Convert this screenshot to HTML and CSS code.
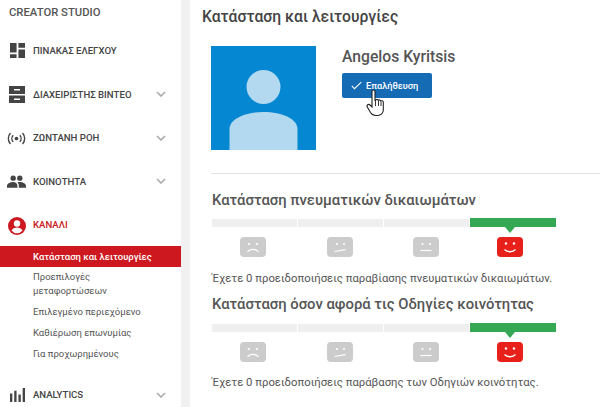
FILE: index.html
```html
<!DOCTYPE html>
<html lang="el">
<head>
<meta charset="utf-8">
<title>Κατάσταση και λειτουργίες</title>
<link rel="stylesheet" href="styles.css">
</head>
<body>
<div class="app">
  <nav class="sidebar">
    <div class="brand">CREATOR STUDIO</div>
    <div class="nav-item">
      <svg class="nav-icon" viewBox="0 0 16 16"><path d="M0 0h7v10H0zM9 0h7v5H9zM0 12h7v4H0zM9 7h7v9H9z" fill="#444"/></svg>
      <span class="nav-label">ΠΙΝΑΚΑΣ ΕΛΕΓΧΟΥ</span>
    </div>
    <div class="nav-item">
      <svg class="nav-icon archive" viewBox="0 0 16 17"><path fill-rule="evenodd" d="M0 0h16v8H0zM0 9.500h16V17H0zM5 3v1.500h6V3zM5 12.500V14h6v-1.500z" fill="#444"/></svg>
      <span class="nav-label">ΔΙΑΧΕΙΡΙΣΤΗΣ ΒΙΝΤΕΟ</span>
      <svg class="chev" viewBox="0 0 10 6"><path d="M1 1l4 4 4-4" fill="none" stroke="#aaa" stroke-width="1.600"/></svg>
    </div>
    <div class="nav-item">
      <svg class="nav-icon live" viewBox="0 0 20 14"><circle cx="10" cy="7" r="2" fill="#444"/><path d="M6.500 3.500a5 5 0 0 0 0 7M13.500 3.500a5 5 0 0 1 0 7M3.500 1a9 9 0 0 0 0 12M16.500 1a9 9 0 0 1 0 12" fill="none" stroke="#444" stroke-width="1.500"/></svg>
      <span class="nav-label">ΖΩΝΤΑΝΗ ΡΟΗ</span>
      <svg class="chev" viewBox="0 0 10 6"><path d="M1 1l4 4 4-4" fill="none" stroke="#aaa" stroke-width="1.600"/></svg>
    </div>
    <div class="nav-item">
      <svg class="nav-icon people" viewBox="0 0 20 13"><circle cx="6.500" cy="3" r="2.800" fill="#444"/><circle cx="13.500" cy="3" r="2.800" fill="#444"/><path d="M0 13v-2c0-2.500 4-4 6.500-4S11 8.500 11 11v2zM12.500 13v-2c0-1.500-.6-2.800-1.700-3.700.9-.2 1.900-.3 2.700-.3 2.500 0 6.500 1.500 6.500 4v2z" fill="#444"/></svg>
      <span class="nav-label">ΚΟΙΝΟΤΗΤΑ</span>
      <svg class="chev" viewBox="0 0 10 6"><path d="M1 1l4 4 4-4" fill="none" stroke="#aaa" stroke-width="1.600"/></svg>
    </div>
    <div class="nav-item nav-current">
      <svg class="nav-icon account" viewBox="0 0 18 18"><circle cx="9" cy="9" r="9" fill="#cc181e"/><circle cx="9" cy="6.500" r="3.200" fill="#fff"/><path d="M3.500 13.500c.8-2 3.500-3 5.500-3s4.700 1 5.500 3a7 7 0 0 1-11 0z" fill="#fff"/></svg>
      <span class="nav-label">ΚΑΝΑΛΙ</span>
    </div>
    <ul class="subnav">
      <li class="sub-active">Κατάσταση και λειτουργίες</li>
      <li>Προεπιλογές<br>μεταφορτώσεων</li>
      <li>Επιλεγμένο περιεχόμενο</li>
      <li>Καθιέρωση επωνυμίας</li>
      <li>Για προχωρημένους</li>
    </ul>
    <div class="nav-item nav-last">
      <svg class="nav-icon" viewBox="0 0 16 16"><path d="M0 7h2.500v9H0zM4.500 4h2.500v12H4.500zM9 8h2.500v8H9zM13.500 1H16v15h-2.500z" fill="#444"/></svg>
      <span class="nav-label">ANALYTICS</span>
      <svg class="chev" viewBox="0 0 10 6"><path d="M1 1l4 4 4-4" fill="none" stroke="#aaa" stroke-width="1.600"/></svg>
    </div>
  </nav>
  <main class="main">
    <h1 class="page-title">Κατάσταση και λειτουργίες</h1>
    <section class="profile">
      <svg class="avatar" viewBox="0 0 105 104"><rect width="105" height="104" fill="#0587d1"/><circle cx="52.500" cy="41" r="17" fill="#b3d9f1"/><path d="M18.500 104V83c0-10 15-17 34-17s34 7 34 17v21z" fill="#b3d9f1"/></svg>
      <div class="profile-info">
        <div class="name">Angelos Kyritsis</div>
        <div class="verify">
          <svg class="check" viewBox="0 0 12 9"><path d="M.800 5l3 3L11.200.800" fill="none" stroke="#fff" stroke-width="1.100"/></svg>
          <span>Επαλήθευση</span>
        </div>
        <svg class="cursor" viewBox="0 0 20 28"><path d="M6 2.500c0-2 3-2 3 0V12l.5-1c1-.8 2.300-.5 2.700.3 1-.7 2.300-.4 2.600.6 1-.5 2.300 0 2.500 1.200V21c0 3-2.500 5.500-5.500 5.500h-2c-2.500 0-4-1-5.300-3L1.300 18c-1-1.800 1.200-3.500 2.700-2l2 2z" fill="#fff" stroke="#222" stroke-width="1.100"/><path d="M9.500 11v6M12.500 11.500V17M15 12.500V17" stroke="#222" stroke-width=".9" fill="none"/></svg>
      </div>
    </section>
    <section class="status first">
      <h2 class="status-title">Κατάσταση πνευματικών δικαιωμάτων</h2>
      <div class="meter">
        <div class="seg"></div><div class="seg"></div><div class="seg"></div><div class="seg on"></div>
      </div>
      <div class="faces">
        <svg class="face" viewBox="0 0 26 20"><rect width="26" height="20" rx="4" fill="#ccc"/><circle cx="9" cy="7" r="1.100" fill="#fff"/><circle cx="17" cy="7" r="1.100" fill="#fff"/><path d="M7.500 15c2.500-3.500 8.500-3.500 11 0" fill="none" stroke="#fff" stroke-width="1.200"/></svg>
        <svg class="face" viewBox="0 0 26 20"><rect width="26" height="20" rx="4" fill="#ccc"/><circle cx="10" cy="7" r="1.100" fill="#fff"/><circle cx="17" cy="7" r="1.100" fill="#fff"/><path d="M7.500 14.500l11-1.800" fill="none" stroke="#fff" stroke-width="1.200"/></svg>
        <svg class="face" viewBox="0 0 26 20"><rect width="26" height="20" rx="4" fill="#ccc"/><circle cx="9.500" cy="7" r="1.100" fill="#fff"/><circle cx="17" cy="7" r="1.100" fill="#fff"/><path d="M7.500 13.500h11" fill="none" stroke="#fff" stroke-width="1.200"/></svg>
        <svg class="face" viewBox="0 0 26 20"><rect width="26" height="20" rx="4" fill="#e8201a"/><circle cx="9" cy="6.500" r="1.200" fill="#fff"/><circle cx="17" cy="6.500" r="1.200" fill="#fff"/><path d="M7.500 12.500c2.500 3 8.500 3 11 0" fill="none" stroke="#fff" stroke-width="1.300"/></svg>
      </div>
      <p class="status-text">Έχετε 0 προειδοποιήσεις παραβίασης πνευματικών δικαιωμάτων.</p>
    </section>
    <section class="status second">
      <h2 class="status-title">Κατάσταση όσον αφορά τις Οδηγίες κοινότητας</h2>
      <div class="meter">
        <div class="seg"></div><div class="seg"></div><div class="seg"></div><div class="seg on"></div>
      </div>
      <div class="faces">
        <svg class="face" viewBox="0 0 26 20"><rect width="26" height="20" rx="4" fill="#ccc"/><circle cx="9" cy="7" r="1.100" fill="#fff"/><circle cx="17" cy="7" r="1.100" fill="#fff"/><path d="M7.500 15c2.500-3.500 8.500-3.500 11 0" fill="none" stroke="#fff" stroke-width="1.200"/></svg>
        <svg class="face" viewBox="0 0 26 20"><rect width="26" height="20" rx="4" fill="#ccc"/><circle cx="10" cy="7" r="1.100" fill="#fff"/><circle cx="17" cy="7" r="1.100" fill="#fff"/><path d="M7.500 14.500l11-1.800" fill="none" stroke="#fff" stroke-width="1.200"/></svg>
        <svg class="face" viewBox="0 0 26 20"><rect width="26" height="20" rx="4" fill="#ccc"/><circle cx="9.500" cy="7" r="1.100" fill="#fff"/><circle cx="17" cy="7" r="1.100" fill="#fff"/><path d="M7.500 13.500h11" fill="none" stroke="#fff" stroke-width="1.200"/></svg>
        <svg class="face" viewBox="0 0 26 20"><rect width="26" height="20" rx="4" fill="#e8201a"/><circle cx="9" cy="6.500" r="1.200" fill="#fff"/><circle cx="17" cy="6.500" r="1.200" fill="#fff"/><path d="M7.500 12.500c2.500 3 8.500 3 11 0" fill="none" stroke="#fff" stroke-width="1.300"/></svg>
      </div>
      <p class="status-text">Έχετε 0 προειδοποιήσεις παράβασης των Οδηγιών κοινότητας.</p>
    </section>
  </main>
</div>
</body>
</html>
```
FILE: styles.css
```css
* { box-sizing: border-box; }
html, body { margin: 0; height: 100%; overflow: hidden; }
body { background: #fff; font-family: Roboto, "Noto Sans", sans-serif; color: #444; }
.app { display: flex; width: 600px; height: 407px; overflow: hidden; }
.sidebar { width: 190px; flex: none; height: 407px; background: #fff; border-right: 9px solid #f1f1f1; padding-top: 5px; }
.brand { font-size: 11.300px; font-weight: 500; color: #555; height: 16px; line-height: 16px; padding-left: 9px; margin-bottom: 8px; }
.nav-item { display: flex; align-items: center; height: 43.500px; position: relative; padding-left: 33px; }
.nav-icon { position: absolute; left: 9.500px; top: 14px; width: 15px; height: 15px; }
.nav-icon.archive { left: 9px; top: 13.500px; width: 16px; height: 17px; }
.nav-icon.live { left: 7px; top: 15.500px; width: 19px; height: 13px; }
.nav-icon.people { left: 7px; top: 15.500px; width: 19px; height: 13px; }
.nav-icon.account { left: 8px; top: 13.500px; width: 18px; height: 18px; }
.nav-label { font-size: 9.600px; font-weight: 500; color: #444; }
.chev { position: absolute; left: 156px; top: 18.500px; width: 10px; height: 6px; }
.nav-current .nav-label { color: #cc181e; }
.subnav { list-style: none; margin: -1px 0 0; padding: 0; font-size: 9.500px; color: #555; }
.subnav li { padding: 3.500px 0 3.500px 33px; line-height: 14px; }
.subnav .sub-active { background: #cc181e; color: #fff; font-weight: 500; height: 21px; line-height: 21px; padding-top: 0; padding-bottom: 0; }
.nav-last { margin-top: 8.500px; }
.main { flex: 1; min-width: 0; padding-left: 12px; }
.page-title { margin: 0; font-size: 15.700px; font-weight: 500; color: #444; line-height: 20px; padding-top: 7px; height: 35px; }
.profile { display: flex; margin-left: 9px; padding-top: 11px; height: 139px; border-bottom: 1px solid #e2e2e2; }
.avatar { width: 105px; height: 104px; flex: none; }
.profile-info { margin-left: 26px; position: relative; }
.name { font-size: 15.700px; font-weight: 500; color: #555; line-height: 20px; margin-top: 1px; margin-bottom: 6px; }
.verify { display: flex; align-items: center; gap: 4px; width: 90px; height: 25px; background: #166bb5; border-radius: 2px; color: #fff; font-size: 9.200px; font-weight: 500; padding-left: 9px; }
.check { width: 11px; height: 9px; flex: none; }
.cursor { position: absolute; left: 24px; top: 43px; width: 20px; height: 28px; }
.status { padding-left: 10px; width: 400px; }
.status.first { padding-top: 16px; }
.status.second { padding-top: 6px; }
.status-title { margin: 0; font-size: 14.800px; font-weight: 500; color: #555; line-height: 20px; }
.meter { display: grid; grid-template-columns: 85px 85px 85px 86px; column-gap: 1px; height: 8px; margin-top: 9px; }
.second .meter { margin-top: 10px; }
.seg { background: #efefef; position: relative; }
.seg.on { background: #34a853; margin-top: -1px; height: 9px; }
.seg.on::after { content: ""; position: absolute; left: 35px; top: 9px; border-left: 5px solid transparent; border-right: 5px solid transparent; border-top: 6px solid #34a853; }
.faces { display: grid; grid-template-columns: 85px 85px 85px 86px; column-gap: 1px; margin-top: 10px; }
.face { width: 26px; height: 20px; margin-left: 29px; }
.face:first-child { margin-left: 28px; }
.face:last-child { margin-left: 27px; }
.status-text { margin: 14px 0 0; font-size: 11.300px; line-height: 16px; height: 17px; color: #555; white-space: nowrap; }
.second .status-text { margin-top: 13px; }
```
